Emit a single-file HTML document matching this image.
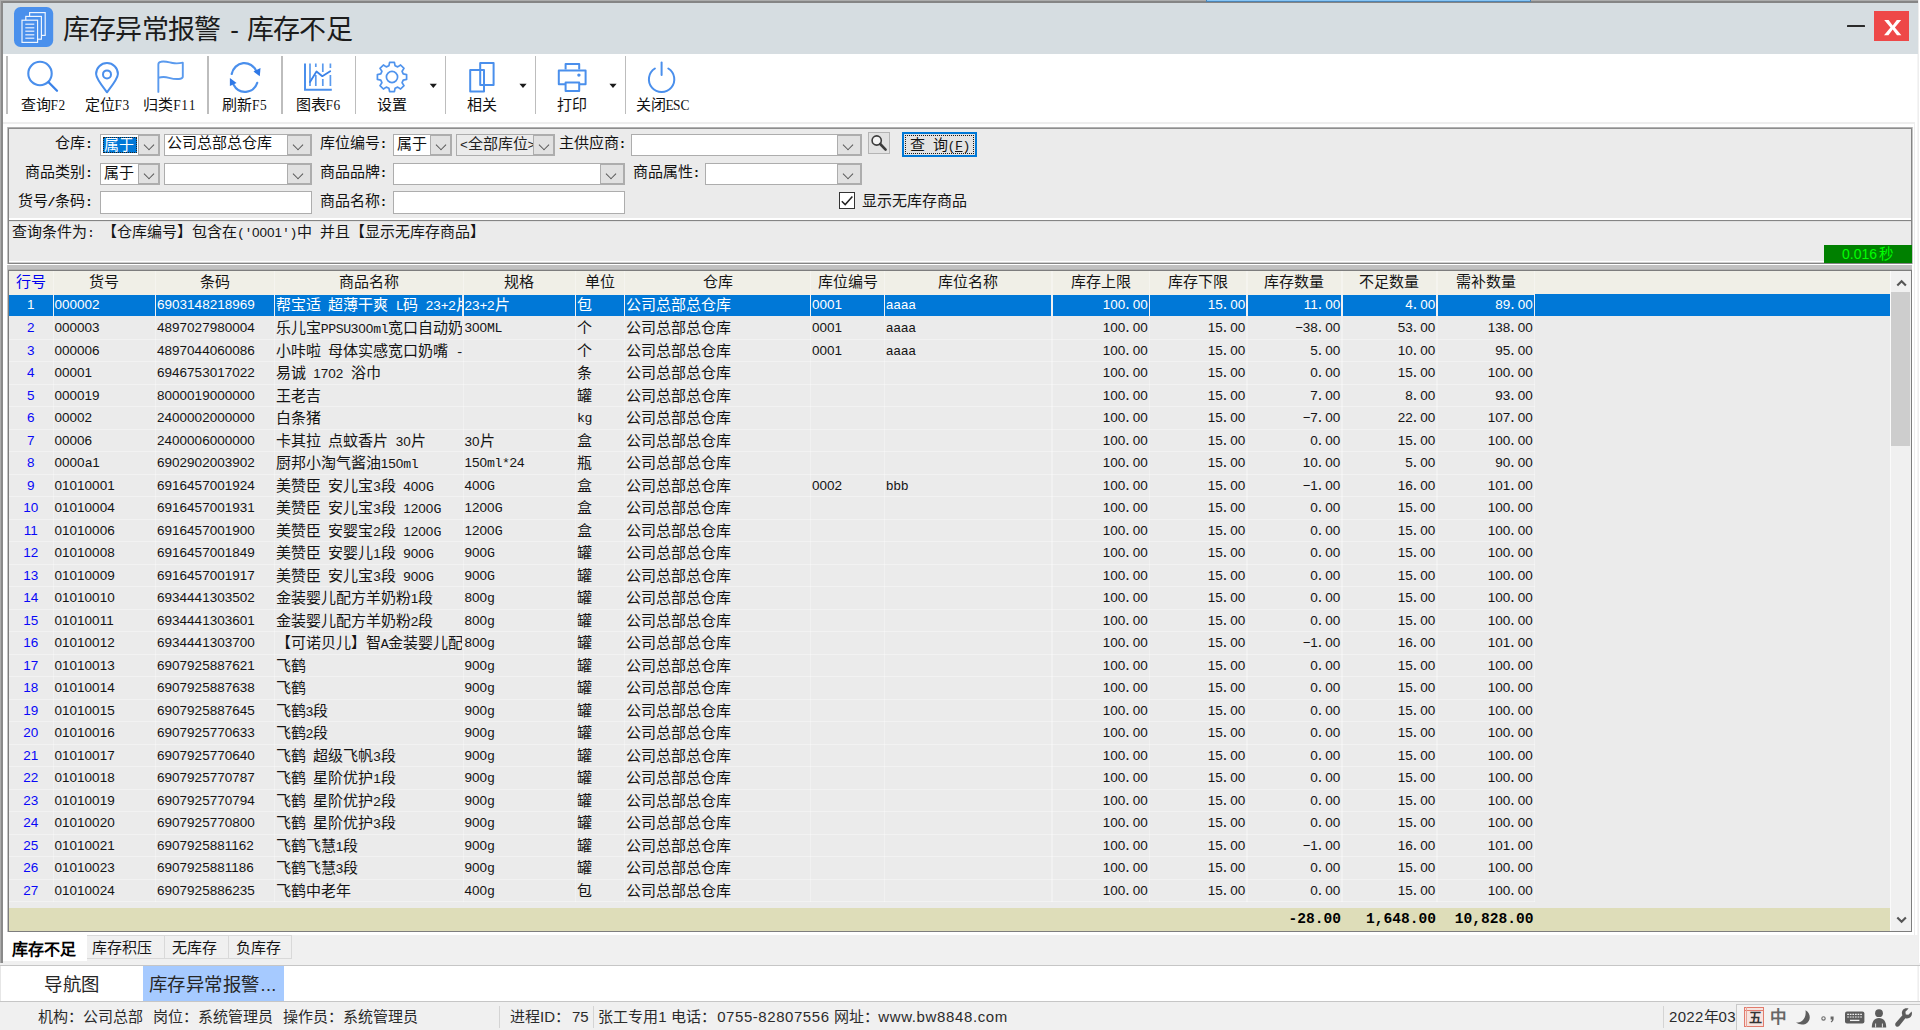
<!DOCTYPE html>
<html lang="zh-CN">
<head>
<meta charset="utf-8">
<title>库存异常报警 - 库存不足</title>
<style>
*{box-sizing:border-box;margin:0;padding:0}
html,body{width:1920px;height:1030px;overflow:hidden;background:#fff}
body{position:relative;font-family:"Liberation Sans",sans-serif;font-size:13.5px;color:#111}
.a{position:absolute}
b{font-weight:normal;font-size:15px;display:inline-block;width:calc(var(--n)*var(--cw,15px));text-align:justify;text-align-last:justify;white-space:nowrap}
i{display:inline-block;width:7.5px;text-align:center;font-style:normal;font-family:"Liberation Mono",monospace;font-size:13.2px;letter-spacing:-.4px}
i.d{position:relative;left:-1.900px}
.s{position:absolute;white-space:nowrap;line-height:16px;height:16px;color:#151515}
/* title */
#tb{left:3px;top:3px;width:1914.800px;height:50.5px;background:#d6dde1}
.tt{position:absolute;top:7.5px;font-size:26px;line-height:38px;color:#1c1c1c;white-space:nowrap}
.tt{--cw:26.2px}
.tt b{font-size:27px;letter-spacing:-.8px}
/* toolbar */
.sep{position:absolute;top:56px;width:1.6px;height:57.5px;background:#bdbdbd}
.tl{position:absolute;top:95.8px;height:17px;line-height:17px;white-space:nowrap;text-align:center;color:#111}
.tl i{font-family:"Liberation Serif",serif;font-size:13.4px;letter-spacing:0;transform:scaleY(1.14);transform-origin:50% 80%}
.ic{position:absolute;overflow:visible}
/* filter panel */
#fp{left:8px;top:128px;width:1904px;height:136px;background:#ebebeb;border:1px solid #848484;border-top-color:#8e8e8e}
.cb{position:absolute;height:22px;background:#fff;border:1px solid #adadad}
.cb .bt{position:absolute;right:0;top:0;bottom:0;width:21px;background:#e1e1e1;border:1px solid #adadad;margin:0}
.cb .bt:after{content:"";position:absolute;left:5.5px;top:4.5px;width:7px;height:7px;border-right:1.4px solid #555;border-bottom:1.4px solid #555;transform:rotate(45deg) scale(.95)}
.cb.dis{background:#ebebeb}
.cb .tx{position:absolute;left:3px;top:1.5px;line-height:16px;white-space:nowrap;overflow:hidden}
.in{position:absolute;height:23px;background:#fff;border:1px solid #adadad}
.lb{position:absolute;height:16px;line-height:16px;white-space:nowrap;text-align:right;color:#111}
.lb i{font-weight:bold}
/* grid */
#gd{left:8px;top:270px;width:1904px;height:662px;border:1px solid #7d7d7d;background:#ebebeb;overflow:hidden}
#gi{position:absolute;left:0;top:0;width:1881px;height:660px}
.hd{position:absolute;left:0;top:0;width:1881px;height:23.750px;background:#f0efe7}
.hc{position:absolute;top:3.4px;height:16px;line-height:16px;text-align:center;white-space:nowrap;color:#151515}
.hc.blue{color:#0000f0}
.vs{position:absolute;top:0;width:1.4px;height:631.3px;background:rgba(255,255,255,.32)}
.r{position:absolute;left:0;width:1526.2px;height:22.5px;border-bottom:1.3px solid rgba(255,255,255,.38)}
.r.sel{border-bottom:none;height:21.3px;background:none}
.c{position:absolute;top:0;height:21.2px;line-height:21.2px;white-space:nowrap;overflow:hidden;padding-left:.7px;color:#141414}
.c.n{color:#0808f8;text-align:center;padding-left:0}
.c.q{text-align:right;padding-right:.9px}
.sel .c{background:#0078d7;color:#fff;height:20.8px;top:0.3px;line-height:20.6px}
.sel .c.n{color:#fff}
#selx{left:1526.2px;top:23px;width:354.800px;height:22px;background:#0078d7}
#ft{left:0;top:636.600px;width:1881px;height:23.400px;background:#deddb9}
.fq{position:absolute;top:3px;height:17px;line-height:17px;text-align:right;font-weight:bold;font-family:"Liberation Mono",monospace;font-size:14.58px;color:#000;white-space:nowrap}
/* tabs */
.tab{position:absolute;top:935.3px;height:24px;background:#f0f0f0;border:1px solid #d9d9d9;border-left:none}
.tab .s{top:3.700px}
/* nav */
.nv{position:absolute;top:974px;line-height:22px;height:22px;white-space:nowrap;color:#262626}
.nv{--cw:18.4px}
.nv b{font-size:18.4px}
/* status */
.st{position:absolute;top:1007.6px;height:18px;line-height:18px;white-space:nowrap;color:#2b2b2b;font-size:15px}
.st b{font-size:15px}
.ss{position:absolute;top:1006px;width:1.3px;height:22px;background:#d4d4d4}
</style>
</head>
<body>
<!-- window frame -->
<div class="a" style="left:0;top:0;width:1918px;height:1.3px;background:#acacac"></div>
<div class="a" style="left:0;top:1.2px;width:1918px;height:1.5px;background:#858585"></div>
<div class="a" style="left:0;top:0;width:1.3px;height:962.700px;background:#acacac"></div>
<div class="a" style="left:1.2px;top:1.2px;width:1.5px;height:961.500px;background:#8a8a8a"></div>
<div class="a" style="left:1917px;top:3px;width:1px;height:998px;background:#f5f5f5"></div>
<div class="a" style="left:1918px;top:0;width:1px;height:1001px;background:#eee"></div>
<div class="a" style="left:1914px;top:123px;width:1px;height:812px;background:#ededed"></div>
<div class="a" style="left:1206.3px;top:0;width:324.6px;height:2.4px;background:#86c5f5;border-bottom:0.8px solid #4d84b4;border-left:0.8px solid #4d84b4;border-right:0.8px solid #4d84b4"></div>

<!-- title bar -->
<div id="tb" class="a">
  <svg class="ic" style="left:11.100px;top:4.400px" width="39.2" height="40" viewBox="0 0 39.2 40">
    <rect x="0" y="0" width="39.2" height="40" rx="6.5" fill="#4a90ec"/>
    <g fill="#4a90ec" stroke="#f4f8fe" stroke-width="1.150">
      <rect x="15.6" y="5.6" width="15.6" height="22.8"/>
      <rect x="11.8" y="9.4" width="15.6" height="22.8"/>
      <rect x="8" y="13.2" width="15.6" height="22.2"/>
    </g>
    <g stroke="#c9dcfa" stroke-width="1.600">
      <path d="M11.3 17.3h9M11.3 20.8h9M11.3 24.3h9M11.3 27.8h9M11.3 31.3h9"/>
    </g>
  </svg>
  <div class="tt" style="left:60px"><b style="--n:6">库存异常报警</b></div>
  <div class="tt" style="left:223.700px;width:16px;text-align:center">-</div>
  <div class="tt" style="left:244px"><b style="--n:4">库存不足</b></div>
  <div class="a" style="left:1844.2px;top:21.7px;width:17.8px;height:2.8px;background:#2a2a2a;border-radius:.5px"></div>
  <div class="a" style="left:1870.8px;top:8.2px;width:35.1px;height:29.8px;background:#ee4848"></div>
  <svg class="ic" style="left:1880.7px;top:17px" width="17.4" height="15.2" viewBox="0 0 17.4 15.2"><path d="M0.2 0H4.6L8.7 5.4L12.8 0H17.2L10.9 7.4L17.4 15.2H13L8.7 9.5L4.4 15.2H0L6.5 7.4Z" fill="#fff"/></svg>
</div>

<!-- toolbar -->
<div class="a" style="left:3px;top:122px;width:1912px;height:2px;background:#eee"></div>
<div class="sep" style="left:6.1px;top:56px"></div>
<div class="sep" style="left:207.4px"></div>
<div class="sep" style="left:281.1px"></div>
<div class="sep" style="left:354.7px"></div>
<div class="sep" style="left:444.8px"></div>
<div class="sep" style="left:534.8px"></div>
<div class="sep" style="left:624.7px"></div>

<!-- icons -->
<svg class="ic" style="left:24px;top:58px" width="38" height="38" viewBox="24 58 38 38" fill="none" stroke="#4a8fec" stroke-width="2.1" stroke-linecap="round">
  <circle cx="40" cy="73.500" r="11.700"/><path d="M48.600 82.200L57 90.800" stroke="#3a82e8" stroke-width="2.300"/>
</svg>
<svg class="ic" style="left:92px;top:58.600px" width="32" height="38" viewBox="92 58 32 38" fill="none" stroke="#4a8fec" stroke-width="2" stroke-linejoin="round">
  <path d="M107 91.3C101 83.5 96.1 77.5 96.1 73A10.9 10.9 0 0 1 117.9 73C117.9 77.5 113 83.5 107 91.3Z"/><circle cx="107" cy="73.4" r="4"/>
</svg>
<svg class="ic" style="left:154px;top:58px" width="34" height="38" viewBox="154 58 34 38" fill="none" stroke="#5a9aee" stroke-width="1.9" stroke-linecap="round" stroke-linejoin="round">
  <path d="M158.350 91.900V64.600Q158.350 62 161 61.700C166 61 169 62.400 172.600 63C176 63.600 179.500 63.400 182.800 62.600V76.500Q182.800 78.300 180.500 78.700C176 79.600 172 78.600 169 77.800C165.500 76.900 162 76.600 158.350 77.900"/>
</svg>
<svg class="ic" style="left:226px;top:58px" width="38" height="38" viewBox="226 58 38 38" fill="none" stroke="#4a8fec" stroke-width="2.2" stroke-linecap="round">
  <path d="M231.7 74A13 13.7 0 0 1 256.4 71.4"/>
  <path d="M257.2 82.800A13 13.7 0 0 1 233.600 84.800"/>
  <path d="M260.5 68L259.800 76.300L253.500 71.500Z" fill="#2f78e6" stroke="none"/>
  <path d="M229.900 78L229.900 86.100L236.600 83Z" fill="#2f78e6" stroke="none"/>
</svg>
<svg class="ic" style="left:300px;top:58px" width="36" height="38" viewBox="300 58 36 38" fill="none" stroke="#5a9aee" stroke-width="2">
  <path d="M305 63.5V89.8H331.8" stroke="#4a8fec"/>
  <path d="M310 63.5V86M315.8 63.5V67M315.8 75V86M322.8 63.5V72M322.8 79V86M330.4 63.5V68M330.4 75V86" stroke-width="1.7"/>
  <path d="M310 82L316.5 71.5L322.3 76.2L330.2 71.3" stroke="#3a82e8" stroke-width="1.8" stroke-linecap="round" stroke-linejoin="round"/>
</svg>
<svg class="ic" style="left:374px;top:59px" width="36" height="36" viewBox="-18 -18 36 36" fill="none" stroke="#4f93ed" stroke-width="1.700" stroke-linejoin="round">
  <g transform="translate(0 0)">
  <circle cx="0" cy="0" r="5.600"/>
  <path d="M-2.4 -14.6L2.4 -14.6L3.1 -11.2L5.7 -10.1L8.6 -12L12 -8.6L10.1 -5.7L11.2 -3.1L14.6 -2.4L14.6 2.4L11.2 3.1L10.1 5.7L12 8.6L8.6 12L5.7 10.1L3.1 11.2L2.4 14.6L-2.4 14.6L-3.1 11.2L-5.7 10.1L-8.6 12L-12 8.6L-10.1 5.7L-11.2 3.1L-14.6 2.4L-14.6 -2.4L-11.2 -3.1L-10.1 -5.7L-12 -8.6L-8.6 -12L-5.7 -10.1L-3.1 -11.2Z"/>
  </g>
</svg>
<svg class="ic" style="left:466px;top:59px" width="32" height="36" viewBox="466 59 32 36" fill="none" stroke="#4a8fec" stroke-width="2" stroke-linejoin="round">
  <rect x="480.2" y="63" width="13.4" height="22"/>
  <rect x="470.2" y="70" width="13.8" height="21.5"/>
</svg>
<svg class="ic" style="left:554px;top:59px" width="36" height="36" viewBox="554 59 36 36" fill="none" stroke="#4a8fec" stroke-width="2" stroke-linejoin="round">
  <path d="M565.6 69.6V64H579.2V69.6"/>
  <path d="M565.6 84.2H558.8V70.4H585.6V84.2H579.2"/>
  <rect x="565.6" y="82.6" width="13.6" height="8.4"/>
  <circle cx="578.9" cy="75.1" r="1.7" fill="#4a8fec" stroke="none"/>
</svg>
<svg class="ic" style="left:644px;top:59px" width="36" height="36" viewBox="644 59 36 36" fill="none" stroke="#4a8fec" stroke-width="2" stroke-linecap="round">
  <path d="M661.6 62.6V75"/>
  <path d="M654.9 68.5A12.7 12.7 0 1 0 668.3 68.5"/>
</svg>

<svg class="ic" style="left:420px;top:80px" width="210" height="12" viewBox="420 80 210 12" fill="#1a1a1a"><path d="M429.7 83.700H436.9L433.3 87.900Z"/><path d="M519.4 83.700H526.6L523.0 87.900Z"/><path d="M609.4 83.700H616.6L613.0 87.900Z"/></svg>
<div class="tl" style="left:13px;width:60px"><b style="--n:2">查询</b><i>F</i><i>2</i></div>
<div class="tl" style="left:77px;width:60px"><b style="--n:2">定位</b><i>F</i><i>3</i></div>
<div class="tl" style="left:134.5px;width:70px"><b style="--n:2">归类</b><i>F</i><i>1</i><i>1</i></div>
<div class="tl" style="left:214.5px;width:60px"><b style="--n:2">刷新</b><i>F</i><i>5</i></div>
<div class="tl" style="left:288px;width:60px"><b style="--n:2">图表</b><i>F</i><i>6</i></div>
<div class="tl" style="left:362px;width:60px"><b style="--n:2">设置</b></div>
<div class="tl" style="left:452px;width:60px"><b style="--n:2">相关</b></div>
<div class="tl" style="left:542px;width:60px"><b style="--n:2">打印</b></div>
<div class="tl" style="left:626.8px;width:70px"><b style="--n:2">关闭</b><i>E</i><i>S</i><i>C</i></div>

<!-- filter panel -->
<div class="a" style="left:7px;top:127px;width:1906px;height:1px;background:#b0b0b0"></div>
<div class="a" style="left:7px;top:127px;width:1px;height:137px;background:#c1c1c1"></div>
<div class="a" style="left:1912px;top:127px;width:1px;height:137px;background:#c4c4c4"></div>
<div id="fp" class="a">
  <div class="a" style="left:0;top:89px;width:1902px;height:2px;background:#fff"></div>
  <div class="a" style="left:0;top:91px;width:1902px;height:1px;background:#848484"></div>
  <div class="a" style="left:0;top:92px;width:1902px;height:1px;background:#e0e0e0"></div>
  <div class="a" style="left:0;top:132px;width:1815px;height:1px;background:#fff"></div>
  <div class="a" style="left:0;top:133px;width:1815px;height:1px;background:#cecece"></div>
</div>
<!-- row 1 -->
<div class="lb" style="left:30px;top:135px;width:62.5px"><b style="--n:2">仓库</b><i>:</i></div>
<div class="cb" style="left:100px;top:134px;width:60px"><div class="a" style="left:2px;top:2px;width:34px;height:16px;background:#0078d7;outline:1px dotted #222;outline-offset:-1px"></div><div class="tx" style="color:#fff"><b style="--n:2">属于</b></div><div class="bt"></div></div>
<div class="cb" style="left:164px;top:134px;width:148px"><div class="tx" style="left:2px;top:0"><b style="--n:7">公司总部总仓库</b></div><div class="bt" style="width:24px"></div></div>
<div class="lb" style="left:310px;top:135px;width:77px"><b style="--n:4">库位编号</b><i>:</i></div>
<div class="cb" style="left:393px;top:134px;width:59px"><div class="tx" style="top:0.5px"><b style="--n:2">属于</b></div><div class="bt"></div></div>
<div class="cb dis" style="left:456px;top:134px;width:99px"><div class="tx" style="top:0.5px;width:73px;color:#222"><i>&lt;</i><b style="--n:4">全部库位</b><i>&gt;</i></div><div class="bt"></div></div>
<div class="lb" style="left:549px;top:135px;width:77px"><b style="--n:4">主供应商</b><i>:</i></div>
<div class="cb" style="left:631px;top:134px;width:231px"><div class="bt" style="width:24px"></div></div>
<div class="a" style="left:867.5px;top:131.8px;width:22.8px;height:22.2px;background:#e2e2e2;border:1px solid #b4b4b4"></div>
<svg class="ic" style="left:870px;top:134px" width="18" height="18" viewBox="0 0 18 18" fill="none" stroke="#3c3c3c"><circle cx="6.7" cy="6.5" r="4.6" stroke-width="1.6" fill="#f4f4f4"/><path d="M10.2 10L15.6 15.6" stroke-width="2.6" stroke-linecap="round"/></svg>
<div class="a" style="left:901.6px;top:132.2px;width:75.8px;height:25px;background:#e3e3e3;border:2px solid #0078d7"></div>
<div class="a" style="left:904.6px;top:135.2px;width:69.8px;height:19px;border:1px dotted #1a1a1a"></div>
<div class="s" style="left:910px;top:137px;width:60px"><b style="--n:1;text-align-last:center">查</b><i>&nbsp;</i><b style="--n:1;text-align-last:center">询</b><i style="text-decoration:none">(</i><i style="text-decoration:underline">F</i><i>)</i></div>
<!-- row 2 -->
<div class="lb" style="left:15px;top:163.8px;width:77.5px"><b style="--n:4">商品类别</b><i>:</i></div>
<div class="cb" style="left:100px;top:163px;width:60px"><div class="tx" style="top:0.5px"><b style="--n:2">属于</b></div><div class="bt"></div></div>
<div class="cb" style="left:164px;top:163px;width:148px"><div class="bt" style="width:24px"></div></div>
<div class="lb" style="left:310px;top:163.8px;width:77px"><b style="--n:4">商品品牌</b><i>:</i></div>
<div class="cb" style="left:393px;top:163px;width:232px"><div class="bt" style="width:24px"></div></div>
<div class="lb" style="left:623px;top:163.8px;width:77px"><b style="--n:4">商品属性</b><i>:</i></div>
<div class="cb" style="left:705px;top:163px;width:157px"><div class="bt" style="width:24px"></div></div>
<!-- row 3 -->
<div class="lb" style="left:10px;top:192.6px;width:82.5px"><b style="--n:2">货号</b><i>/</i><b style="--n:2">条码</b><i>:</i></div>
<div class="in" style="left:100px;top:191px;width:212px"></div>
<div class="lb" style="left:310px;top:192.6px;width:77px"><b style="--n:4">商品名称</b><i>:</i></div>
<div class="in" style="left:393px;top:191px;width:232px"></div>
<div class="a" style="left:838.7px;top:192.3px;width:16.6px;height:16.6px;background:#fff;border:1.2px solid #333"></div>
<svg class="ic" style="left:840px;top:194px" width="14" height="14" viewBox="0 0 14 14" fill="none" stroke="#222" stroke-width="1.5"><path d="M1.8 7.2L5.2 10.6L12.4 2.6"/></svg>
<div class="s" style="left:862.4px;top:192.8px"><b style="--n:7">显示无库存商品</b></div>
<!-- query condition -->
<div class="s" style="left:12px;top:224.200px"><b style="--n:5">查询条件为</b><i>:</i><i>&nbsp;</i><b style="--n:9">【仓库编号】包含在</b><i>(</i><i>'</i>0001<i>'</i><i>)</i><b style="--n:1;text-align-last:center">中</b><i>&nbsp;</i><b style="--n:11">并且【显示无库存商品】</b></div>
<div class="a" style="left:1823.8px;top:244.9px;width:87.8px;height:18.3px;background:#008000"></div>
<div class="a" style="left:1842px;top:246px;height:16px;line-height:16px;font-size:14px;color:#0f0;white-space:nowrap">0.016<span style="font-size:5px"> </span><b style="font-size:14.5px;--n:1;text-align-last:center;--cw:14.5px">秒</b></div>
<div class="a" style="left:8px;top:265px;width:1904px;height:4px;background:#c1c1c1"></div>
<div class="a" style="left:8px;top:269px;width:1904px;height:1px;background:#b0b0b0"></div>
<div class="a" style="left:7px;top:265px;width:1px;height:667px;background:#c4c4c4"></div>

<!-- grid -->
<div id="gd" class="a">
<div id="gi">
<div class="hd">
<div class="hc blue" style="left:0px;width:43.5px"><b style="--n:2">行号</b></div>
<div class="hc" style="left:44.9px;width:101.1px"><b style="--n:2">货号</b></div>
<div class="hc" style="left:147.4px;width:117.35px"><b style="--n:2">条码</b></div>
<div class="hc" style="left:266.15px;width:187.35px"><b style="--n:4">商品名称</b></div>
<div class="hc" style="left:454.9px;width:111.1px"><b style="--n:2">规格</b></div>
<div class="hc" style="left:567.4px;width:47.35px"><b style="--n:2">单位</b></div>
<div class="hc" style="left:616.15px;width:184.85px"><b style="--n:2">仓库</b></div>
<div class="hc" style="left:802.4px;width:72.35px"><b style="--n:4">库位编号</b></div>
<div class="hc" style="left:876.15px;width:166.1px"><b style="--n:4">库位名称</b></div>
<div class="hc" style="left:1043.65px;width:96.1px"><b style="--n:4">库存上限</b></div>
<div class="hc" style="left:1141.15px;width:96.1px"><b style="--n:4">库存下限</b></div>
<div class="hc" style="left:1238.65px;width:93.6px"><b style="--n:4">库存数量</b></div>
<div class="hc" style="left:1333.65px;width:93.6px"><b style="--n:4">不足数量</b></div>
<div class="hc" style="left:1428.65px;width:96.1px"><b style="--n:4">需补数量</b></div>
</div>
<div class="vs" style="left:43.5px"></div>
<div class="vs" style="left:146px"></div>
<div class="vs" style="left:264.75px"></div>
<div class="vs" style="left:453.5px"></div>
<div class="vs" style="left:566px"></div>
<div class="vs" style="left:614.75px"></div>
<div class="vs" style="left:801px"></div>
<div class="vs" style="left:874.75px"></div>
<div class="vs" style="left:1042.25px"></div>
<div class="vs" style="left:1139.75px"></div>
<div class="vs" style="left:1237.25px"></div>
<div class="vs" style="left:1332.25px"></div>
<div class="vs" style="left:1427.25px"></div>
<div class="vs" style="left:1524.75px"></div>
<div class="r sel" style="top:23.75px">
<div class="c n" style="left:0px;width:43.5px">1</div>
<div class="c" style="left:44.9px;width:101.1px">000002</div>
<div class="c" style="left:147.4px;width:117.35px">6903148218969</div>
<div class="c" style="left:266.15px;width:187.35px"><b style="--n:3">帮宝适</b><i>&nbsp;</i><b style="--n:4">超薄干爽</b><i>&nbsp;</i><i>L</i><b style="--n:1;text-align-last:center">码</b><i>&nbsp;</i>23<i>+</i>2<b style="--n:1;text-align-last:center">片</b></div>
<div class="c" style="left:454.9px;width:111.1px">23<i>+</i>2<b style="--n:1;text-align-last:center">片</b></div>
<div class="c" style="left:567.4px;width:47.35px"><b style="--n:1;text-align-last:center">包</b></div>
<div class="c" style="left:616.15px;width:184.85px"><b style="--n:7">公司总部总仓库</b></div>
<div class="c" style="left:802.4px;width:72.35px">0001</div>
<div class="c" style="left:876.15px;width:166.1px"><i>a</i><i>a</i><i>a</i><i>a</i></div>
<div class="c q" style="left:1043.65px;width:96.1px">100<i class="d">.</i>00</div>
<div class="c q" style="left:1141.15px;width:96.1px">15<i class="d">.</i>00</div>
<div class="c q" style="left:1238.65px;width:93.6px">11<i class="d">.</i>00</div>
<div class="c q" style="left:1333.65px;width:93.6px">4<i class="d">.</i>00</div>
<div class="c q" style="left:1428.65px;width:96.1px">89<i class="d">.</i>00</div>
</div>
<div class="r" style="top:46.25px">
<div class="c n" style="left:0px;width:43.5px">2</div>
<div class="c" style="left:44.9px;width:101.1px">000003</div>
<div class="c" style="left:147.4px;width:117.35px">4897027980004</div>
<div class="c" style="left:266.15px;width:187.35px"><b style="--n:3">乐儿宝</b><i>P</i><i>P</i><i>S</i><i>U</i>300<i>m</i><i>l</i><b style="--n:6">宽口自动奶瓶</b></div>
<div class="c" style="left:454.9px;width:111.1px">300<i>M</i><i>L</i></div>
<div class="c" style="left:567.4px;width:47.35px"><b style="--n:1;text-align-last:center">个</b></div>
<div class="c" style="left:616.15px;width:184.85px"><b style="--n:7">公司总部总仓库</b></div>
<div class="c" style="left:802.4px;width:72.35px">0001</div>
<div class="c" style="left:876.15px;width:166.1px"><i>a</i><i>a</i><i>a</i><i>a</i></div>
<div class="c q" style="left:1043.65px;width:96.1px">100<i class="d">.</i>00</div>
<div class="c q" style="left:1141.15px;width:96.1px">15<i class="d">.</i>00</div>
<div class="c q" style="left:1238.65px;width:93.6px"><i>−</i>38<i class="d">.</i>00</div>
<div class="c q" style="left:1333.65px;width:93.6px">53<i class="d">.</i>00</div>
<div class="c q" style="left:1428.65px;width:96.1px">138<i class="d">.</i>00</div>
</div>
<div class="r" style="top:68.75px">
<div class="c n" style="left:0px;width:43.5px">3</div>
<div class="c" style="left:44.9px;width:101.1px">000006</div>
<div class="c" style="left:147.4px;width:117.35px">4897044060086</div>
<div class="c" style="left:266.15px;width:187.35px"><b style="--n:3">小咔啦</b><i>&nbsp;</i><b style="--n:8">母体实感宽口奶嘴</b><i>&nbsp;</i><i>-</i></div>
<div class="c" style="left:567.4px;width:47.35px"><b style="--n:1;text-align-last:center">个</b></div>
<div class="c" style="left:616.15px;width:184.85px"><b style="--n:7">公司总部总仓库</b></div>
<div class="c" style="left:802.4px;width:72.35px">0001</div>
<div class="c" style="left:876.15px;width:166.1px"><i>a</i><i>a</i><i>a</i><i>a</i></div>
<div class="c q" style="left:1043.65px;width:96.1px">100<i class="d">.</i>00</div>
<div class="c q" style="left:1141.15px;width:96.1px">15<i class="d">.</i>00</div>
<div class="c q" style="left:1238.65px;width:93.6px">5<i class="d">.</i>00</div>
<div class="c q" style="left:1333.65px;width:93.6px">10<i class="d">.</i>00</div>
<div class="c q" style="left:1428.65px;width:96.1px">95<i class="d">.</i>00</div>
</div>
<div class="r" style="top:91.25px">
<div class="c n" style="left:0px;width:43.5px">4</div>
<div class="c" style="left:44.9px;width:101.1px">00001</div>
<div class="c" style="left:147.4px;width:117.35px">6946753017022</div>
<div class="c" style="left:266.15px;width:187.35px"><b style="--n:2">易诚</b><i>&nbsp;</i>1702<i>&nbsp;</i><b style="--n:2">浴巾</b></div>
<div class="c" style="left:567.4px;width:47.35px"><b style="--n:1;text-align-last:center">条</b></div>
<div class="c" style="left:616.15px;width:184.85px"><b style="--n:7">公司总部总仓库</b></div>
<div class="c q" style="left:1043.65px;width:96.1px">100<i class="d">.</i>00</div>
<div class="c q" style="left:1141.15px;width:96.1px">15<i class="d">.</i>00</div>
<div class="c q" style="left:1238.65px;width:93.6px">0<i class="d">.</i>00</div>
<div class="c q" style="left:1333.65px;width:93.6px">15<i class="d">.</i>00</div>
<div class="c q" style="left:1428.65px;width:96.1px">100<i class="d">.</i>00</div>
</div>
<div class="r" style="top:113.75px">
<div class="c n" style="left:0px;width:43.5px">5</div>
<div class="c" style="left:44.9px;width:101.1px">000019</div>
<div class="c" style="left:147.4px;width:117.35px">8000019000000</div>
<div class="c" style="left:266.15px;width:187.35px"><b style="--n:3">王老吉</b></div>
<div class="c" style="left:567.4px;width:47.35px"><b style="--n:1;text-align-last:center">罐</b></div>
<div class="c" style="left:616.15px;width:184.85px"><b style="--n:7">公司总部总仓库</b></div>
<div class="c q" style="left:1043.65px;width:96.1px">100<i class="d">.</i>00</div>
<div class="c q" style="left:1141.15px;width:96.1px">15<i class="d">.</i>00</div>
<div class="c q" style="left:1238.65px;width:93.6px">7<i class="d">.</i>00</div>
<div class="c q" style="left:1333.65px;width:93.6px">8<i class="d">.</i>00</div>
<div class="c q" style="left:1428.65px;width:96.1px">93<i class="d">.</i>00</div>
</div>
<div class="r" style="top:136.25px">
<div class="c n" style="left:0px;width:43.5px">6</div>
<div class="c" style="left:44.9px;width:101.1px">00002</div>
<div class="c" style="left:147.4px;width:117.35px">2400002000000</div>
<div class="c" style="left:266.15px;width:187.35px"><b style="--n:3">白条猪</b></div>
<div class="c" style="left:567.4px;width:47.35px"><i>k</i><i>g</i></div>
<div class="c" style="left:616.15px;width:184.85px"><b style="--n:7">公司总部总仓库</b></div>
<div class="c q" style="left:1043.65px;width:96.1px">100<i class="d">.</i>00</div>
<div class="c q" style="left:1141.15px;width:96.1px">15<i class="d">.</i>00</div>
<div class="c q" style="left:1238.65px;width:93.6px"><i>−</i>7<i class="d">.</i>00</div>
<div class="c q" style="left:1333.65px;width:93.6px">22<i class="d">.</i>00</div>
<div class="c q" style="left:1428.65px;width:96.1px">107<i class="d">.</i>00</div>
</div>
<div class="r" style="top:158.75px">
<div class="c n" style="left:0px;width:43.5px">7</div>
<div class="c" style="left:44.9px;width:101.1px">00006</div>
<div class="c" style="left:147.4px;width:117.35px">2400006000000</div>
<div class="c" style="left:266.15px;width:187.35px"><b style="--n:3">卡其拉</b><i>&nbsp;</i><b style="--n:4">点蚊香片</b><i>&nbsp;</i>30<b style="--n:1;text-align-last:center">片</b></div>
<div class="c" style="left:454.9px;width:111.1px">30<b style="--n:1;text-align-last:center">片</b></div>
<div class="c" style="left:567.4px;width:47.35px"><b style="--n:1;text-align-last:center">盒</b></div>
<div class="c" style="left:616.15px;width:184.85px"><b style="--n:7">公司总部总仓库</b></div>
<div class="c q" style="left:1043.65px;width:96.1px">100<i class="d">.</i>00</div>
<div class="c q" style="left:1141.15px;width:96.1px">15<i class="d">.</i>00</div>
<div class="c q" style="left:1238.65px;width:93.6px">0<i class="d">.</i>00</div>
<div class="c q" style="left:1333.65px;width:93.6px">15<i class="d">.</i>00</div>
<div class="c q" style="left:1428.65px;width:96.1px">100<i class="d">.</i>00</div>
</div>
<div class="r" style="top:181.25px">
<div class="c n" style="left:0px;width:43.5px">8</div>
<div class="c" style="left:44.9px;width:101.1px">0000<i>a</i>1</div>
<div class="c" style="left:147.4px;width:117.35px">6902902003902</div>
<div class="c" style="left:266.15px;width:187.35px"><b style="--n:7">厨邦小淘气酱油</b>150<i>m</i><i>l</i></div>
<div class="c" style="left:454.9px;width:111.1px">150<i>m</i><i>l</i><i>*</i>24</div>
<div class="c" style="left:567.4px;width:47.35px"><b style="--n:1;text-align-last:center">瓶</b></div>
<div class="c" style="left:616.15px;width:184.85px"><b style="--n:7">公司总部总仓库</b></div>
<div class="c q" style="left:1043.65px;width:96.1px">100<i class="d">.</i>00</div>
<div class="c q" style="left:1141.15px;width:96.1px">15<i class="d">.</i>00</div>
<div class="c q" style="left:1238.65px;width:93.6px">10<i class="d">.</i>00</div>
<div class="c q" style="left:1333.65px;width:93.6px">5<i class="d">.</i>00</div>
<div class="c q" style="left:1428.65px;width:96.1px">90<i class="d">.</i>00</div>
</div>
<div class="r" style="top:203.75px">
<div class="c n" style="left:0px;width:43.5px">9</div>
<div class="c" style="left:44.9px;width:101.1px">01010001</div>
<div class="c" style="left:147.4px;width:117.35px">6916457001924</div>
<div class="c" style="left:266.15px;width:187.35px"><b style="--n:3">美赞臣</b><i>&nbsp;</i><b style="--n:3">安儿宝</b>3<b style="--n:1;text-align-last:center">段</b><i>&nbsp;</i>400<i>G</i></div>
<div class="c" style="left:454.9px;width:111.1px">400<i>G</i></div>
<div class="c" style="left:567.4px;width:47.35px"><b style="--n:1;text-align-last:center">盒</b></div>
<div class="c" style="left:616.15px;width:184.85px"><b style="--n:7">公司总部总仓库</b></div>
<div class="c" style="left:802.4px;width:72.35px">0002</div>
<div class="c" style="left:876.15px;width:166.1px"><i>b</i><i>b</i><i>b</i></div>
<div class="c q" style="left:1043.65px;width:96.1px">100<i class="d">.</i>00</div>
<div class="c q" style="left:1141.15px;width:96.1px">15<i class="d">.</i>00</div>
<div class="c q" style="left:1238.65px;width:93.6px"><i>−</i>1<i class="d">.</i>00</div>
<div class="c q" style="left:1333.65px;width:93.6px">16<i class="d">.</i>00</div>
<div class="c q" style="left:1428.65px;width:96.1px">101<i class="d">.</i>00</div>
</div>
<div class="r" style="top:226.25px">
<div class="c n" style="left:0px;width:43.5px">10</div>
<div class="c" style="left:44.9px;width:101.1px">01010004</div>
<div class="c" style="left:147.4px;width:117.35px">6916457001931</div>
<div class="c" style="left:266.15px;width:187.35px"><b style="--n:3">美赞臣</b><i>&nbsp;</i><b style="--n:3">安儿宝</b>3<b style="--n:1;text-align-last:center">段</b><i>&nbsp;</i>1200<i>G</i></div>
<div class="c" style="left:454.9px;width:111.1px">1200<i>G</i></div>
<div class="c" style="left:567.4px;width:47.35px"><b style="--n:1;text-align-last:center">盒</b></div>
<div class="c" style="left:616.15px;width:184.85px"><b style="--n:7">公司总部总仓库</b></div>
<div class="c q" style="left:1043.65px;width:96.1px">100<i class="d">.</i>00</div>
<div class="c q" style="left:1141.15px;width:96.1px">15<i class="d">.</i>00</div>
<div class="c q" style="left:1238.65px;width:93.6px">0<i class="d">.</i>00</div>
<div class="c q" style="left:1333.65px;width:93.6px">15<i class="d">.</i>00</div>
<div class="c q" style="left:1428.65px;width:96.1px">100<i class="d">.</i>00</div>
</div>
<div class="r" style="top:248.75px">
<div class="c n" style="left:0px;width:43.5px">11</div>
<div class="c" style="left:44.9px;width:101.1px">01010006</div>
<div class="c" style="left:147.4px;width:117.35px">6916457001900</div>
<div class="c" style="left:266.15px;width:187.35px"><b style="--n:3">美赞臣</b><i>&nbsp;</i><b style="--n:3">安婴宝</b>2<b style="--n:1;text-align-last:center">段</b><i>&nbsp;</i>1200<i>G</i></div>
<div class="c" style="left:454.9px;width:111.1px">1200<i>G</i></div>
<div class="c" style="left:567.4px;width:47.35px"><b style="--n:1;text-align-last:center">盒</b></div>
<div class="c" style="left:616.15px;width:184.85px"><b style="--n:7">公司总部总仓库</b></div>
<div class="c q" style="left:1043.65px;width:96.1px">100<i class="d">.</i>00</div>
<div class="c q" style="left:1141.15px;width:96.1px">15<i class="d">.</i>00</div>
<div class="c q" style="left:1238.65px;width:93.6px">0<i class="d">.</i>00</div>
<div class="c q" style="left:1333.65px;width:93.6px">15<i class="d">.</i>00</div>
<div class="c q" style="left:1428.65px;width:96.1px">100<i class="d">.</i>00</div>
</div>
<div class="r" style="top:271.25px">
<div class="c n" style="left:0px;width:43.5px">12</div>
<div class="c" style="left:44.9px;width:101.1px">01010008</div>
<div class="c" style="left:147.4px;width:117.35px">6916457001849</div>
<div class="c" style="left:266.15px;width:187.35px"><b style="--n:3">美赞臣</b><i>&nbsp;</i><b style="--n:3">安婴儿</b>1<b style="--n:1;text-align-last:center">段</b><i>&nbsp;</i>900<i>G</i></div>
<div class="c" style="left:454.9px;width:111.1px">900<i>G</i></div>
<div class="c" style="left:567.4px;width:47.35px"><b style="--n:1;text-align-last:center">罐</b></div>
<div class="c" style="left:616.15px;width:184.85px"><b style="--n:7">公司总部总仓库</b></div>
<div class="c q" style="left:1043.65px;width:96.1px">100<i class="d">.</i>00</div>
<div class="c q" style="left:1141.15px;width:96.1px">15<i class="d">.</i>00</div>
<div class="c q" style="left:1238.65px;width:93.6px">0<i class="d">.</i>00</div>
<div class="c q" style="left:1333.65px;width:93.6px">15<i class="d">.</i>00</div>
<div class="c q" style="left:1428.65px;width:96.1px">100<i class="d">.</i>00</div>
</div>
<div class="r" style="top:293.75px">
<div class="c n" style="left:0px;width:43.5px">13</div>
<div class="c" style="left:44.9px;width:101.1px">01010009</div>
<div class="c" style="left:147.4px;width:117.35px">6916457001917</div>
<div class="c" style="left:266.15px;width:187.35px"><b style="--n:3">美赞臣</b><i>&nbsp;</i><b style="--n:3">安儿宝</b>3<b style="--n:1;text-align-last:center">段</b><i>&nbsp;</i>900<i>G</i></div>
<div class="c" style="left:454.9px;width:111.1px">900<i>G</i></div>
<div class="c" style="left:567.4px;width:47.35px"><b style="--n:1;text-align-last:center">罐</b></div>
<div class="c" style="left:616.15px;width:184.85px"><b style="--n:7">公司总部总仓库</b></div>
<div class="c q" style="left:1043.65px;width:96.1px">100<i class="d">.</i>00</div>
<div class="c q" style="left:1141.15px;width:96.1px">15<i class="d">.</i>00</div>
<div class="c q" style="left:1238.65px;width:93.6px">0<i class="d">.</i>00</div>
<div class="c q" style="left:1333.65px;width:93.6px">15<i class="d">.</i>00</div>
<div class="c q" style="left:1428.65px;width:96.1px">100<i class="d">.</i>00</div>
</div>
<div class="r" style="top:316.25px">
<div class="c n" style="left:0px;width:43.5px">14</div>
<div class="c" style="left:44.9px;width:101.1px">01010010</div>
<div class="c" style="left:147.4px;width:117.35px">6934441303502</div>
<div class="c" style="left:266.15px;width:187.35px"><b style="--n:9">金装婴儿配方羊奶粉</b>1<b style="--n:1;text-align-last:center">段</b></div>
<div class="c" style="left:454.9px;width:111.1px">800<i>g</i></div>
<div class="c" style="left:567.4px;width:47.35px"><b style="--n:1;text-align-last:center">罐</b></div>
<div class="c" style="left:616.15px;width:184.85px"><b style="--n:7">公司总部总仓库</b></div>
<div class="c q" style="left:1043.65px;width:96.1px">100<i class="d">.</i>00</div>
<div class="c q" style="left:1141.15px;width:96.1px">15<i class="d">.</i>00</div>
<div class="c q" style="left:1238.65px;width:93.6px">0<i class="d">.</i>00</div>
<div class="c q" style="left:1333.65px;width:93.6px">15<i class="d">.</i>00</div>
<div class="c q" style="left:1428.65px;width:96.1px">100<i class="d">.</i>00</div>
</div>
<div class="r" style="top:338.75px">
<div class="c n" style="left:0px;width:43.5px">15</div>
<div class="c" style="left:44.9px;width:101.1px">01010011</div>
<div class="c" style="left:147.4px;width:117.35px">6934441303601</div>
<div class="c" style="left:266.15px;width:187.35px"><b style="--n:9">金装婴儿配方羊奶粉</b>2<b style="--n:1;text-align-last:center">段</b></div>
<div class="c" style="left:454.9px;width:111.1px">800<i>g</i></div>
<div class="c" style="left:567.4px;width:47.35px"><b style="--n:1;text-align-last:center">罐</b></div>
<div class="c" style="left:616.15px;width:184.85px"><b style="--n:7">公司总部总仓库</b></div>
<div class="c q" style="left:1043.65px;width:96.1px">100<i class="d">.</i>00</div>
<div class="c q" style="left:1141.15px;width:96.1px">15<i class="d">.</i>00</div>
<div class="c q" style="left:1238.65px;width:93.6px">0<i class="d">.</i>00</div>
<div class="c q" style="left:1333.65px;width:93.6px">15<i class="d">.</i>00</div>
<div class="c q" style="left:1428.65px;width:96.1px">100<i class="d">.</i>00</div>
</div>
<div class="r" style="top:361.25px">
<div class="c n" style="left:0px;width:43.5px">16</div>
<div class="c" style="left:44.9px;width:101.1px">01010012</div>
<div class="c" style="left:147.4px;width:117.35px">6934441303700</div>
<div class="c" style="left:266.15px;width:187.35px"><b style="--n:7">【可诺贝儿】智</b><i>A</i><b style="--n:6">金装婴儿配方</b></div>
<div class="c" style="left:454.9px;width:111.1px">800<i>g</i></div>
<div class="c" style="left:567.4px;width:47.35px"><b style="--n:1;text-align-last:center">罐</b></div>
<div class="c" style="left:616.15px;width:184.85px"><b style="--n:7">公司总部总仓库</b></div>
<div class="c q" style="left:1043.65px;width:96.1px">100<i class="d">.</i>00</div>
<div class="c q" style="left:1141.15px;width:96.1px">15<i class="d">.</i>00</div>
<div class="c q" style="left:1238.65px;width:93.6px"><i>−</i>1<i class="d">.</i>00</div>
<div class="c q" style="left:1333.65px;width:93.6px">16<i class="d">.</i>00</div>
<div class="c q" style="left:1428.65px;width:96.1px">101<i class="d">.</i>00</div>
</div>
<div class="r" style="top:383.75px">
<div class="c n" style="left:0px;width:43.5px">17</div>
<div class="c" style="left:44.9px;width:101.1px">01010013</div>
<div class="c" style="left:147.4px;width:117.35px">6907925887621</div>
<div class="c" style="left:266.15px;width:187.35px"><b style="--n:2">飞鹤</b></div>
<div class="c" style="left:454.9px;width:111.1px">900<i>g</i></div>
<div class="c" style="left:567.4px;width:47.35px"><b style="--n:1;text-align-last:center">罐</b></div>
<div class="c" style="left:616.15px;width:184.85px"><b style="--n:7">公司总部总仓库</b></div>
<div class="c q" style="left:1043.65px;width:96.1px">100<i class="d">.</i>00</div>
<div class="c q" style="left:1141.15px;width:96.1px">15<i class="d">.</i>00</div>
<div class="c q" style="left:1238.65px;width:93.6px">0<i class="d">.</i>00</div>
<div class="c q" style="left:1333.65px;width:93.6px">15<i class="d">.</i>00</div>
<div class="c q" style="left:1428.65px;width:96.1px">100<i class="d">.</i>00</div>
</div>
<div class="r" style="top:406.25px">
<div class="c n" style="left:0px;width:43.5px">18</div>
<div class="c" style="left:44.9px;width:101.1px">01010014</div>
<div class="c" style="left:147.4px;width:117.35px">6907925887638</div>
<div class="c" style="left:266.15px;width:187.35px"><b style="--n:2">飞鹤</b></div>
<div class="c" style="left:454.9px;width:111.1px">900<i>g</i></div>
<div class="c" style="left:567.4px;width:47.35px"><b style="--n:1;text-align-last:center">罐</b></div>
<div class="c" style="left:616.15px;width:184.85px"><b style="--n:7">公司总部总仓库</b></div>
<div class="c q" style="left:1043.65px;width:96.1px">100<i class="d">.</i>00</div>
<div class="c q" style="left:1141.15px;width:96.1px">15<i class="d">.</i>00</div>
<div class="c q" style="left:1238.65px;width:93.6px">0<i class="d">.</i>00</div>
<div class="c q" style="left:1333.65px;width:93.6px">15<i class="d">.</i>00</div>
<div class="c q" style="left:1428.65px;width:96.1px">100<i class="d">.</i>00</div>
</div>
<div class="r" style="top:428.75px">
<div class="c n" style="left:0px;width:43.5px">19</div>
<div class="c" style="left:44.9px;width:101.1px">01010015</div>
<div class="c" style="left:147.4px;width:117.35px">6907925887645</div>
<div class="c" style="left:266.15px;width:187.35px"><b style="--n:2">飞鹤</b>3<b style="--n:1;text-align-last:center">段</b></div>
<div class="c" style="left:454.9px;width:111.1px">900<i>g</i></div>
<div class="c" style="left:567.4px;width:47.35px"><b style="--n:1;text-align-last:center">罐</b></div>
<div class="c" style="left:616.15px;width:184.85px"><b style="--n:7">公司总部总仓库</b></div>
<div class="c q" style="left:1043.65px;width:96.1px">100<i class="d">.</i>00</div>
<div class="c q" style="left:1141.15px;width:96.1px">15<i class="d">.</i>00</div>
<div class="c q" style="left:1238.65px;width:93.6px">0<i class="d">.</i>00</div>
<div class="c q" style="left:1333.65px;width:93.6px">15<i class="d">.</i>00</div>
<div class="c q" style="left:1428.65px;width:96.1px">100<i class="d">.</i>00</div>
</div>
<div class="r" style="top:451.25px">
<div class="c n" style="left:0px;width:43.5px">20</div>
<div class="c" style="left:44.9px;width:101.1px">01010016</div>
<div class="c" style="left:147.4px;width:117.35px">6907925770633</div>
<div class="c" style="left:266.15px;width:187.35px"><b style="--n:2">飞鹤</b>2<b style="--n:1;text-align-last:center">段</b></div>
<div class="c" style="left:454.9px;width:111.1px">900<i>g</i></div>
<div class="c" style="left:567.4px;width:47.35px"><b style="--n:1;text-align-last:center">罐</b></div>
<div class="c" style="left:616.15px;width:184.85px"><b style="--n:7">公司总部总仓库</b></div>
<div class="c q" style="left:1043.65px;width:96.1px">100<i class="d">.</i>00</div>
<div class="c q" style="left:1141.15px;width:96.1px">15<i class="d">.</i>00</div>
<div class="c q" style="left:1238.65px;width:93.6px">0<i class="d">.</i>00</div>
<div class="c q" style="left:1333.65px;width:93.6px">15<i class="d">.</i>00</div>
<div class="c q" style="left:1428.65px;width:96.1px">100<i class="d">.</i>00</div>
</div>
<div class="r" style="top:473.75px">
<div class="c n" style="left:0px;width:43.5px">21</div>
<div class="c" style="left:44.9px;width:101.1px">01010017</div>
<div class="c" style="left:147.4px;width:117.35px">6907925770640</div>
<div class="c" style="left:266.15px;width:187.35px"><b style="--n:2">飞鹤</b><i>&nbsp;</i><b style="--n:4">超级飞帆</b>3<b style="--n:1;text-align-last:center">段</b></div>
<div class="c" style="left:454.9px;width:111.1px">900<i>g</i></div>
<div class="c" style="left:567.4px;width:47.35px"><b style="--n:1;text-align-last:center">罐</b></div>
<div class="c" style="left:616.15px;width:184.85px"><b style="--n:7">公司总部总仓库</b></div>
<div class="c q" style="left:1043.65px;width:96.1px">100<i class="d">.</i>00</div>
<div class="c q" style="left:1141.15px;width:96.1px">15<i class="d">.</i>00</div>
<div class="c q" style="left:1238.65px;width:93.6px">0<i class="d">.</i>00</div>
<div class="c q" style="left:1333.65px;width:93.6px">15<i class="d">.</i>00</div>
<div class="c q" style="left:1428.65px;width:96.1px">100<i class="d">.</i>00</div>
</div>
<div class="r" style="top:496.25px">
<div class="c n" style="left:0px;width:43.5px">22</div>
<div class="c" style="left:44.9px;width:101.1px">01010018</div>
<div class="c" style="left:147.4px;width:117.35px">6907925770787</div>
<div class="c" style="left:266.15px;width:187.35px"><b style="--n:2">飞鹤</b><i>&nbsp;</i><b style="--n:4">星阶优护</b>1<b style="--n:1;text-align-last:center">段</b></div>
<div class="c" style="left:454.9px;width:111.1px">900<i>g</i></div>
<div class="c" style="left:567.4px;width:47.35px"><b style="--n:1;text-align-last:center">罐</b></div>
<div class="c" style="left:616.15px;width:184.85px"><b style="--n:7">公司总部总仓库</b></div>
<div class="c q" style="left:1043.65px;width:96.1px">100<i class="d">.</i>00</div>
<div class="c q" style="left:1141.15px;width:96.1px">15<i class="d">.</i>00</div>
<div class="c q" style="left:1238.65px;width:93.6px">0<i class="d">.</i>00</div>
<div class="c q" style="left:1333.65px;width:93.6px">15<i class="d">.</i>00</div>
<div class="c q" style="left:1428.65px;width:96.1px">100<i class="d">.</i>00</div>
</div>
<div class="r" style="top:518.75px">
<div class="c n" style="left:0px;width:43.5px">23</div>
<div class="c" style="left:44.9px;width:101.1px">01010019</div>
<div class="c" style="left:147.4px;width:117.35px">6907925770794</div>
<div class="c" style="left:266.15px;width:187.35px"><b style="--n:2">飞鹤</b><i>&nbsp;</i><b style="--n:4">星阶优护</b>2<b style="--n:1;text-align-last:center">段</b></div>
<div class="c" style="left:454.9px;width:111.1px">900<i>g</i></div>
<div class="c" style="left:567.4px;width:47.35px"><b style="--n:1;text-align-last:center">罐</b></div>
<div class="c" style="left:616.15px;width:184.85px"><b style="--n:7">公司总部总仓库</b></div>
<div class="c q" style="left:1043.65px;width:96.1px">100<i class="d">.</i>00</div>
<div class="c q" style="left:1141.15px;width:96.1px">15<i class="d">.</i>00</div>
<div class="c q" style="left:1238.65px;width:93.6px">0<i class="d">.</i>00</div>
<div class="c q" style="left:1333.65px;width:93.6px">15<i class="d">.</i>00</div>
<div class="c q" style="left:1428.65px;width:96.1px">100<i class="d">.</i>00</div>
</div>
<div class="r" style="top:541.25px">
<div class="c n" style="left:0px;width:43.5px">24</div>
<div class="c" style="left:44.9px;width:101.1px">01010020</div>
<div class="c" style="left:147.4px;width:117.35px">6907925770800</div>
<div class="c" style="left:266.15px;width:187.35px"><b style="--n:2">飞鹤</b><i>&nbsp;</i><b style="--n:4">星阶优护</b>3<b style="--n:1;text-align-last:center">段</b></div>
<div class="c" style="left:454.9px;width:111.1px">900<i>g</i></div>
<div class="c" style="left:567.4px;width:47.35px"><b style="--n:1;text-align-last:center">罐</b></div>
<div class="c" style="left:616.15px;width:184.85px"><b style="--n:7">公司总部总仓库</b></div>
<div class="c q" style="left:1043.65px;width:96.1px">100<i class="d">.</i>00</div>
<div class="c q" style="left:1141.15px;width:96.1px">15<i class="d">.</i>00</div>
<div class="c q" style="left:1238.65px;width:93.6px">0<i class="d">.</i>00</div>
<div class="c q" style="left:1333.65px;width:93.6px">15<i class="d">.</i>00</div>
<div class="c q" style="left:1428.65px;width:96.1px">100<i class="d">.</i>00</div>
</div>
<div class="r" style="top:563.75px">
<div class="c n" style="left:0px;width:43.5px">25</div>
<div class="c" style="left:44.9px;width:101.1px">01010021</div>
<div class="c" style="left:147.4px;width:117.35px">6907925881162</div>
<div class="c" style="left:266.15px;width:187.35px"><b style="--n:4">飞鹤飞慧</b>1<b style="--n:1;text-align-last:center">段</b></div>
<div class="c" style="left:454.9px;width:111.1px">900<i>g</i></div>
<div class="c" style="left:567.4px;width:47.35px"><b style="--n:1;text-align-last:center">罐</b></div>
<div class="c" style="left:616.15px;width:184.85px"><b style="--n:7">公司总部总仓库</b></div>
<div class="c q" style="left:1043.65px;width:96.1px">100<i class="d">.</i>00</div>
<div class="c q" style="left:1141.15px;width:96.1px">15<i class="d">.</i>00</div>
<div class="c q" style="left:1238.65px;width:93.6px"><i>−</i>1<i class="d">.</i>00</div>
<div class="c q" style="left:1333.65px;width:93.6px">16<i class="d">.</i>00</div>
<div class="c q" style="left:1428.65px;width:96.1px">101<i class="d">.</i>00</div>
</div>
<div class="r" style="top:586.25px">
<div class="c n" style="left:0px;width:43.5px">26</div>
<div class="c" style="left:44.9px;width:101.1px">01010023</div>
<div class="c" style="left:147.4px;width:117.35px">6907925881186</div>
<div class="c" style="left:266.15px;width:187.35px"><b style="--n:4">飞鹤飞慧</b>3<b style="--n:1;text-align-last:center">段</b></div>
<div class="c" style="left:454.9px;width:111.1px">900<i>g</i></div>
<div class="c" style="left:567.4px;width:47.35px"><b style="--n:1;text-align-last:center">罐</b></div>
<div class="c" style="left:616.15px;width:184.85px"><b style="--n:7">公司总部总仓库</b></div>
<div class="c q" style="left:1043.65px;width:96.1px">100<i class="d">.</i>00</div>
<div class="c q" style="left:1141.15px;width:96.1px">15<i class="d">.</i>00</div>
<div class="c q" style="left:1238.65px;width:93.6px">0<i class="d">.</i>00</div>
<div class="c q" style="left:1333.65px;width:93.6px">15<i class="d">.</i>00</div>
<div class="c q" style="left:1428.65px;width:96.1px">100<i class="d">.</i>00</div>
</div>
<div class="r" style="top:608.75px">
<div class="c n" style="left:0px;width:43.5px">27</div>
<div class="c" style="left:44.9px;width:101.1px">01010024</div>
<div class="c" style="left:147.4px;width:117.35px">6907925886235</div>
<div class="c" style="left:266.15px;width:187.35px"><b style="--n:5">飞鹤中老年</b></div>
<div class="c" style="left:454.9px;width:111.1px">400<i>g</i></div>
<div class="c" style="left:567.4px;width:47.35px"><b style="--n:1;text-align-last:center">包</b></div>
<div class="c" style="left:616.15px;width:184.85px"><b style="--n:7">公司总部总仓库</b></div>
<div class="c q" style="left:1043.65px;width:96.1px">100<i class="d">.</i>00</div>
<div class="c q" style="left:1141.15px;width:96.1px">15<i class="d">.</i>00</div>
<div class="c q" style="left:1238.65px;width:93.6px">0<i class="d">.</i>00</div>
<div class="c q" style="left:1333.65px;width:93.6px">15<i class="d">.</i>00</div>
<div class="c q" style="left:1428.65px;width:96.1px">100<i class="d">.</i>00</div>
</div>
<div id="selx" class="a"></div>
<div id="ft" class="a">
  <div class="fq" style="left:1221px;width:111px">-28.00</div>
  <div class="fq" style="left:1316px;width:111px">1,648.00</div>
  <div class="fq" style="left:1413.6px;width:111px">10,828.00</div>
</div>
</div>
<!-- scrollbar -->
<div class="a" style="left:1881px;top:0;width:21px;height:660px;background:#f0f0f0;border-left:1px solid #fafafa"></div>
<div class="a" style="left:1882px;top:21.400px;width:19px;height:153.400px;background:#cdcdcd"></div>
<svg class="ic" style="left:1884.6px;top:5.5px" width="15" height="12" viewBox="0 0 15 12" fill="none" stroke="#555" stroke-width="2.1"><path d="M3.300 8.600L7.600 4.300L11.900 8.600"/></svg>
<svg class="ic" style="left:1884.6px;top:642.5px" width="15" height="12" viewBox="0 0 15 12" fill="none" stroke="#555" stroke-width="2.1"><path d="M3.300 3.400L7.600 7.700L11.900 3.400"/></svg>
</div>

<!-- bottom tabs -->
<div class="a" style="left:2.7px;top:935.2px;width:1915.300px;height:30px;background:#f0f0f0"></div>
<div class="a" style="left:0;top:962.700px;width:1920px;height:2.500px;background:#f0f0f0"></div>
<div class="a" style="left:0;top:966.400px;width:1.100px;height:35px;background:#e6e6e6"></div>
<div class="a" style="left:2.7px;top:932.4px;width:84px;height:28.8px;background:#fff"></div>
<div class="s" style="left:12px;top:942.4px;font-weight:bold;color:#000"><b style="font-weight:bold;font-size:16px;--n:4;--cw:16px">库存不足</b></div>
<div class="tab" style="left:86.8px;width:77.8px"><div class="s" style="left:5.4px"><b style="--n:4">库存积压</b></div></div>
<div class="tab" style="left:164.6px;width:64px"><div class="s" style="left:7px"><b style="--n:3">无库存</b></div></div>
<div class="tab" style="left:228.6px;width:63px"><div class="s" style="left:7px"><b style="--n:3">负库存</b></div></div>
<div class="a" style="left:0;top:965px;width:1920px;height:1.400px;background:#c6c6c6"></div>

<!-- nav tabs -->
<div class="a" style="left:142.6px;top:966.200px;width:141.2px;height:35px;background:#a6caff"></div>
<div class="nv" style="left:44.2px"><b style="--n:3">导航图</b></div>
<div class="nv" style="left:148.8px"><b style="--n:6">库存异常报警</b></div>
<div class="nv" style="left:260.600px;font-size:18px;letter-spacing:.350px">...</div>

<!-- status bar -->
<div class="a" style="left:0;top:1000.900px;width:1920px;height:29.100px;background:#f0f0f0;border-top:1.800px solid #c6c6c6"></div>
<div class="st" style="left:37.6px"><b style="--n:3">机构：</b></div>
<div class="st" style="left:82.6px"><b style="--n:4">公司总部</b></div>
<div class="st" style="left:152.6px"><b style="--n:3">岗位：</b></div>
<div class="st" style="left:198.2px"><b style="--n:5">系统管理员</b></div>
<div class="st" style="left:282.6px"><b style="--n:4">操作员：</b></div>
<div class="st" style="left:342.6px"><b style="--n:5">系统管理员</b></div>
<div class="ss" style="left:498.6px"></div>
<div class="st" style="left:510px"><b style="--n:2">进程</b>ID<b style="--n:1;text-align-last:center">：</b></div>
<div class="st" style="left:572px">75</div>
<div class="ss" style="left:592.6px"></div>
<div class="st" style="left:598.2px"><b style="--n:4">张工专用</b>1</div>
<div class="st" style="left:671.200px"><b style="--n:3">电话：</b></div>
<div class="st" style="left:717.200px;letter-spacing:.560px">0755-82807556</div>
<div class="st" style="left:834px"><b style="--n:3">网址：</b></div>
<div class="st" style="left:878.300px;letter-spacing:.620px">www.bw8848.com</div>
<div class="ss" style="left:1663px"></div>
<div class="st" style="left:1669px;letter-spacing:.300px">2022<b style="--n:1;text-align-last:center">年</b>03</div>
<!-- IME bar -->
<div class="a" style="left:1736.2px;top:1003.6px;width:183.8px;height:26.4px;background:#f3f3f3;border-left:1.3px solid #c9c9c9;border-top:1.3px solid #c9c9c9"></div>
<div class="a" style="left:1743.5px;top:1007px;width:20.4px;height:20.4px;border:1.4px solid #e27b6c;background:#f6e4e0"></div>
<div class="a" style="left:1743.5px;top:1009.6px;width:20.4px;height:1.2px;background:#e27b6c"></div>
<div class="a" style="left:1746.3px;top:1007px;width:1.2px;height:20.4px;background:#e9a196"></div>
<div class="a" style="left:1748.6px;top:1010px;height:16px;line-height:16px;font-weight:bold;color:#333"><b style="font-weight:bold;font-size:13px;--n:1;text-align-last:center;--cw:13px">五</b></div>
<div class="a" style="left:1770.4px;top:1006.5px;height:20px;line-height:20px;font-weight:bold;color:#666"><b style="font-weight:bold;font-size:16.5px;--n:1;text-align-last:center;--cw:16.5px">中</b></div>
<svg class="ic" style="left:1794px;top:1008px" width="20" height="20" viewBox="0 0 20 20"><path d="M11.5 2.2C17 5 17.4 13.5 11.5 15.9C8.4 17.2 4.6 16.6 2 14.6C8 14.8 12.6 10.2 11.5 2.2Z" fill="#5e5e5e"/></svg>
<svg class="ic" style="left:1819px;top:1008px" width="20" height="20" viewBox="0 0 20 20"><circle cx="4.5" cy="10.4" r="1.7" fill="none" stroke="#6a6a6a" stroke-width="1.1"/><path d="M11.6 8.6h3v2.4c0 1.6-.8 2.8-2.4 3.4l-.5-.9c.9-.4 1.3-1 1.3-1.9h-1.4Z" fill="#666"/></svg>
<svg class="ic" style="left:1844px;top:1010px" width="22" height="16" viewBox="0 0 22 16"><rect x="1" y="1.6" width="19.4" height="11.8" rx="2" fill="#5c5c5c"/><path d="M3.2 4.4h15M3.2 7h15" stroke="#f3f3f3" stroke-width="1.1" stroke-dasharray="1.7 0.9"/><path d="M6 10.4h9.4" stroke="#f3f3f3" stroke-width="1.3"/></svg>
<svg class="ic" style="left:1870px;top:1007px" width="18" height="22" viewBox="0 0 18 22"><circle cx="9" cy="6.2" r="3.9" fill="#5c5c5c"/><path d="M1.8 20.5c0-6 2.4-9.6 7.2-9.6s7.2 3.600 7.200 9.600Z" fill="#5c5c5c"/><path d="M5.600 20.500v-4M12.400 20.500v-4" stroke="#f3f3f3" stroke-width=".9"/></svg>
<svg class="ic" style="left:1894px;top:1007px" width="20" height="22" viewBox="0 0 20 22"><path d="M17.600 4.600L14.400 7.800L11.800 7.400L11.400 4.800L14.600 1.600C12.400 0.800 10 1.400 8.800 3C7.600 4.600 7.600 6.600 8.400 8.200L1.800 15.800C0.900 16.900 1 18.400 2 19.200C3 20 4.400 19.900 5.200 18.900L11.400 11.200C13.200 11.900 15.400 11.400 16.800 9.800C18 8.400 18.300 6.400 17.600 4.600Z" fill="#5c5c5c"/></svg>
</body>
</html>
